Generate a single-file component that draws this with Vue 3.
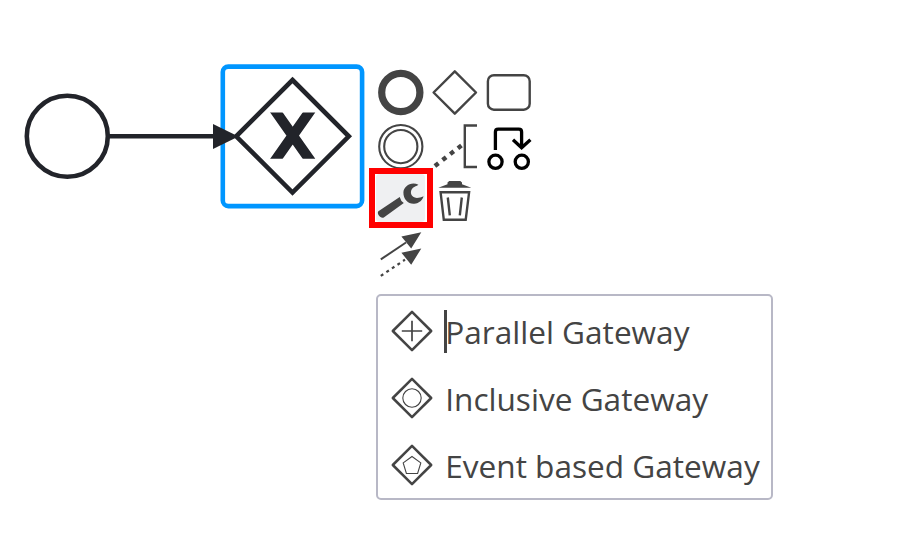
<script setup>
const entries = [
  { id: 'end', box: '376 66 49 48' },
  { id: 'gateway', box: '430 66 49 48' },
  { id: 'task', box: '484 66 49 48' },
  { id: 'intermediate', box: '376 120 49 48' },
  { id: 'annotation', box: '430 120 49 48' },
  { id: 'append', box: '484 120 49 48' },
  { id: 'wrench', box: '376 174 49 48' },
  { id: 'trash', box: '430 174 49 48' },
  { id: 'connect', box: '376 228 49 48' },
]
const options = [
  { id: 'parallel', label: 'Parallel Gateway' },
  { id: 'inclusive', label: 'Inclusive Gateway' },
  { id: 'event', label: 'Event based Gateway' },
]
</script>

<template>
  <main class="canvas">
    <svg class="diagram" width="370" height="220" viewBox="0 0 370 220">
      <g fill="none" stroke="#22242a" stroke-width="4.6">
        <circle cx="67.3" cy="136.3" r="40.5" />
        <path d="M109 136.3H220" />
        <rect x="222.8" y="66.6" width="139.3" height="139.5" rx="5.5" stroke="#0096ff" />
        <path d="M292.5 80L348.8 136.3L292.5 192.6L236.2 136.3Z" />
      </g>
      <path d="M213 124L238.5 136.4L213 149Z" fill="#22242a" />
      <svg x="270" y="112.5" width="45.4" height="46.2" viewBox="0 0 45.4 46.2" class="marker">
        <path d="M3.2 -4.6L42.2 50.8M42.2 -4.6L3.2 50.8" stroke="#22242a" stroke-width="10.3" />
      </svg>
    </svg>

    <div class="pad">
      <div v-for="e in entries" :key="e.id" class="entry" :class="{ active: e.id === 'wrench', first: e.id === 'connect' }">
        <svg width="49" height="48" :viewBox="e.box" fill="none" stroke="#444" stroke-width="2.4">
          <circle v-if="e.id === 'end'" cx="400.8" cy="92.5" r="19.1" stroke-width="7.2" />
          <path v-else-if="e.id === 'gateway'" d="M454.8 71.3L476 92.5L454.8 113.7L433.6 92.5Z" stroke-linejoin="round" />
          <rect v-else-if="e.id === 'task'" x="487.9" y="75.2" width="41.8" height="34.5" rx="6" />
          <template v-else-if="e.id === 'intermediate'">
            <circle cx="400.8" cy="146.6" r="21.6" stroke-width="2.1" />
            <circle cx="400.8" cy="146.6" r="16.6" stroke-width="2.1" />
          </template>
          <template v-else-if="e.id === 'annotation'">
            <path d="M477 125.5H464.8V167H477" />
            <path d="M434.9 166L462 145" stroke-width="4.4" stroke-dasharray="4.5 5.2" />
          </template>
          <g v-else-if="e.id === 'append'" stroke="#000" stroke-width="3.3">
            <path d="M495.4 150V132Q495.4 129.2 498.2 129.2H518.8Q521.6 129.2 521.6 132V148M513 139.7L521.6 147.7L530.4 139.7" />
            <circle cx="495.5" cy="161.8" r="6.6" />
            <circle cx="521.8" cy="161.8" r="6.6" />
          </g>
          <g v-else-if="e.id === 'wrench'" fill="#444" stroke="none">
            <path d="M378.4 211.2L399.7 196.9Q400.8 201.1 403.8 203.1L383.8 217.4C380.8 219.2 376.3 213.5 378.4 211.2Z" />
            <path d="M418.4 184.7C411.2 181 403.7 186.2 403.4 192.2C403.2 199.5 408.5 204.2 414.2 203.7C419.3 203.3 422.9 199.7 423.5 196.2C420.5 197.4 417.5 198.5 414.8 197.6C410.2 196.1 409.8 190.6 413 187.8C414.5 186.5 416.5 186.1 418.4 184.7Z" />
          </g>
          <template v-else-if="e.id === 'trash'">
            <path d="M438.3 187.8L447.5 184.2V182.6L449.2 180.9H460.3L462 182.6V184.2L471.3 187.8Z" fill="#444" stroke="none" />
            <path d="M440.6 192.3H469.1L465.7 219.8H443.8Z" />
            <path d="M447.8 197.5L449.8 215.4M461.8 197.5L459.8 215.4" />
          </template>
          <template v-else>
            <path d="M380.8 259.4L406 242.5" stroke-width="2" />
            <path d="M380.8 275.9L405 259.7" stroke-width="2.2" stroke-dasharray="3 3.7" />
            <path d="M421.3 232.3L401.4 236.5L411.2 248.5ZM421.3 248.5L401.4 252.7L411.2 264.7Z" fill="#444" stroke="none" />
          </template>
        </svg>
      </div>
    </div>
    <div class="highlight"></div>

    <ul class="menu">
      <li v-for="o in options" :key="o.id" class="option">
        <svg class="icon" width="42" height="42" viewBox="0 0 42 42" fill="none" stroke="#444">
          <path d="M21 1.8L40.2 21L21 40.2L1.8 21Z" stroke-width="2.5" stroke-linejoin="round" />
          <path v-if="o.id === 'parallel'" d="M21 10.8V31.2M10.8 21H31.2" stroke-width="1.7" />
          <circle v-else-if="o.id === 'inclusive'" cx="21" cy="21" r="9.2" stroke-width="1.1" />
          <path v-else d="M21 12.5L29.8 18.9L26.6 29.5H15.4L12.2 18.9Z" stroke-width="1.1" />
        </svg>
        <span class="label">{{ o.label }}</span>
      </li>
    </ul>
    <div class="caret"></div>
  </main>
</template>

<style>
body { margin: 0; background: #fff; }
</style>

<style scoped>
.canvas { position: relative; width: 902px; height: 556px; overflow: hidden; background: #fff; font-family: "Open Sans", sans-serif; }
.diagram { position: absolute; left: 0; top: 0; }
.marker { overflow: hidden; }
.pad { position: absolute; left: 376px; top: 66px; display: grid; grid-template-columns: repeat(3, 49px); grid-auto-rows: 48px; gap: 6px 5px; }
.entry { border-radius: 4px; }
.entry.first { grid-column-start: 1; }
.entry.active { background: #eff0f2; }
.entry svg { display: block; overflow: visible; }
.highlight { position: absolute; left: 369px; top: 168px; width: 64px; height: 60px; box-sizing: border-box; border: 6px solid #f00; }
.menu { position: absolute; left: 376px; top: 294px; width: 397px; height: 206px; box-sizing: border-box; margin: 0; padding: 1px 0 0 13px; list-style: none; border: 2px solid #b8b8c6; border-radius: 5px; background: #fff; }
.option { display: flex; align-items: center; gap: 12.2px; height: 67px; }
.icon { flex: none; }
.label { padding-top: 3px; font-size: 31.6px; line-height: 44px; color: #444; white-space: nowrap; }
.caret { position: absolute; left: 444px; top: 310px; width: 3px; height: 43px; background: #444; }
</style>
